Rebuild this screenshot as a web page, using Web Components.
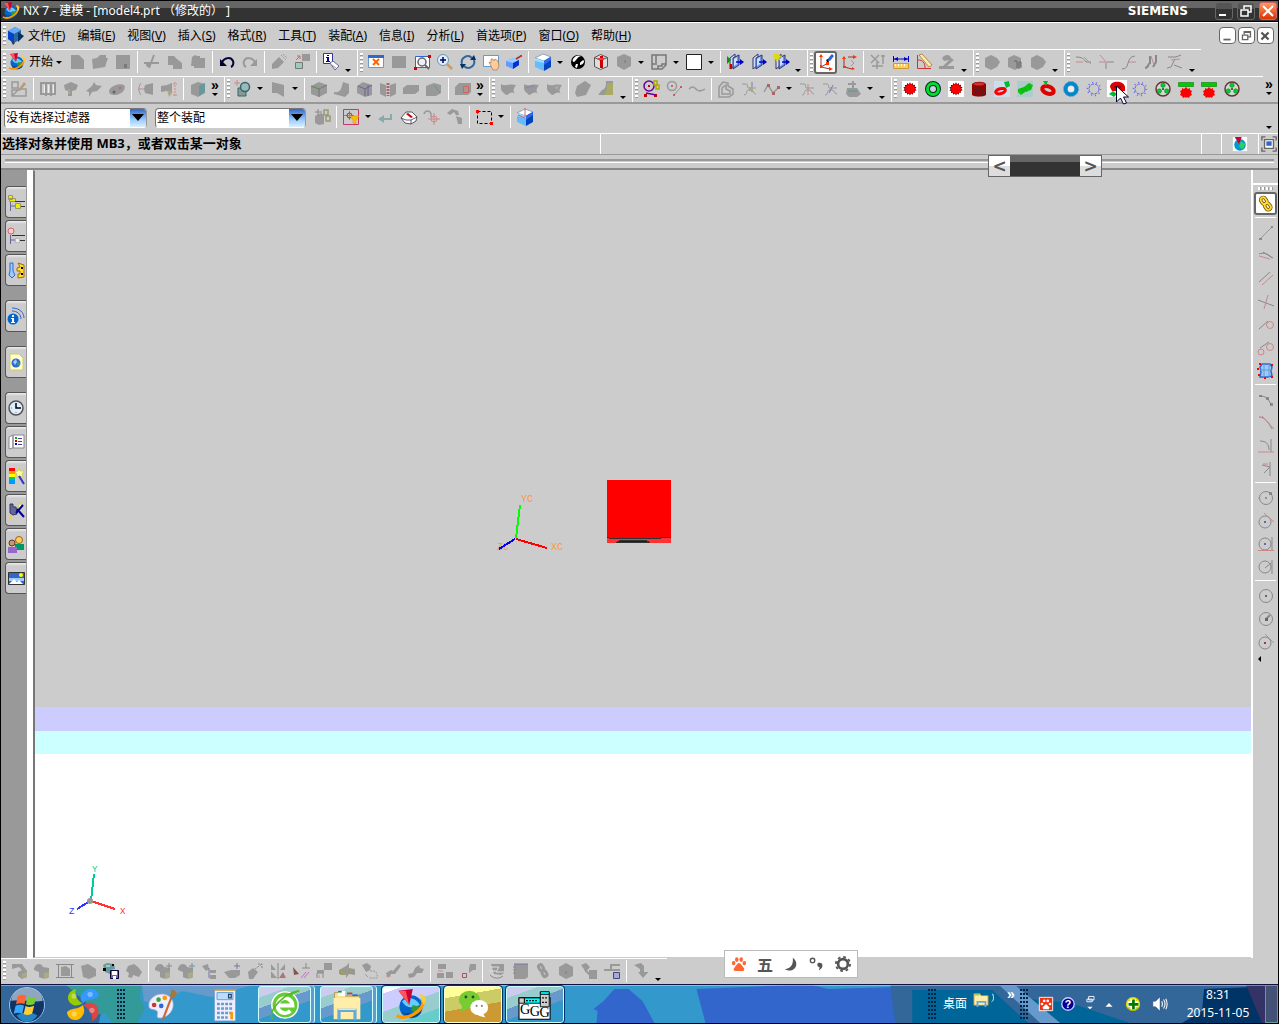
<!DOCTYPE html>
<html lang="zh-CN">
<head>
<meta charset="utf-8">
<title>NX 7 - 建模</title>
<style>
  html, body {
    height: 100%;
    margin: 0;
    overflow: hidden;
  }
  body {
    font: 12px/16px "Noto Sans", "Noto Sans CJK SC", sans-serif;
    text-spacing-trim: space-all;
    color: #000;
    background: #ccc;
  }
</style>
</head>
<body>
<nx-app></nx-app>

<script>
const gear = (fill) => `<path fill="${fill}" d="M9 1l1.300 2.200 2-1.500.4 2.500 2.500-.3-.6 2.400 2.400.6-1.700 1.900 1.700 1.700-2.400.8.7 2.300-2.500-.2-.4 2.500-2.100-1.400L9 17l-1.300-2.400-2 1.500-.4-2.500-2.500.3.6-2.400L1 10.800l1.700-1.900L1 7.200l2.400-.8-.7-2.300 2.500.2.400-2.500 2.100 1.400z"/>`;
const cube = `<path fill="#fff" stroke="#369" stroke-width=".5" d="M1 5l8-4 8 3-7 4z"/><path fill="#6bf" d="M1 5l9 3v10l-9-4z"/><path fill="#9df" d="M1 5l9 3v2L1 8z"/><path fill="#04b" d="M17 4l-7 4v10l7-4z"/><path fill="#36e" d="M17 4l-7 4v4l7-5z"/>`;
const section = `<path fill="#cdf" stroke="#336" d="M4 5l5-4v11l-5 4z"/><path fill="#69f" stroke="#336" d="M7 5l6-3v10l-6 4z"/><path fill="#cdf" d="M8 6l3-2v7l-3 2z"/><path stroke="#00c" stroke-width="1.500" d="M10 9h5"/><path fill="#00c" d="M14 6l4 3-4 3z"/>`;
const wheel = `<circle cx="9" cy="9" r="7" fill="#cdc" stroke="#633" stroke-width="1.500"/><g fill="#0c3" stroke="#363" stroke-width=".5"><circle cx="9" cy="5.200" r="2.200"/><circle cx="5.300" cy="11" r="2.200"/><circle cx="12.700" cy="11" r="2.200"/></g><circle cx="9" cy="9" r="1" fill="#333"/>`;
const rack = `<path fill="#0c0" stroke="#393" d="M1.500 2.500h15v4h-15z"/><path fill="#f00" d="M5 8l2 1 2-2 2 2 2-1v2l2 1-1 2 1 2-2 1-1 2-2-1-1 1-1-1-2 1-1-2-2-1 1-2-1-2 2-1z"/>`;
const sprocket = `<circle cx="9" cy="9" r="5" fill="none" stroke="#66c" stroke-dasharray="3 1"/><circle cx="9" cy="9" r="6.500" fill="none" stroke="#66f" stroke-width="1.500" stroke-dasharray="1 3"/>`;
const spur = `<path fill="#fff" d="M1 1h16v16H1z"/><g transform="translate(1.500 1.500) scale(.83)">${gear('#600')}</g><circle cx="9" cy="9" r="5" fill="#f00"/>`;
const sheet = `<path class="g" d="M2 4c4 3 8-1 15 1-3 4-3 6-1 9-5-4-7 2-9 1-3-3-4-3-5-6z"/>`;
const blob = `<path class="g" d="M3 3c3-2 6-1 7 2l6 1v9c-3 2-6 2-10 0v-5L1 8V6z"/><path fill="#aa8" d="M11 11l5-1v5l-5 2z"/>`;
const nxLogo = `<circle cx="9" cy="10" r="6.500" fill="#06c"/><path fill="#6cf" d="M4 7c3-3 8-2 10 2-3 1-7 3-10-2z"/><path fill="#048" d="M4 13c3 4 8 4 11 0-4 1-8 1-11 0z"/><path fill="#393" d="M10 9l4 1-2 4-3-2z"/><path fill="none" stroke="#f90" stroke-width="1.800" d="M1 15c5 3 15-2 15-9"/><path fill="#fc3" d="M14 3c4 0 4 4 2 6z"/><path fill="#c03" d="M2 1l8-1-2 9z"/><path fill="#f55" d="M2 1l4 0 2 8z"/>`;
const curl = `<path class="l" d="M2 4h4c3 0 0 4 3 4h7M4 15c4 0 1-5 5-5h2c3 0 2 4 5 4"/>`;

const ICONS = {
  'nx-logo': nxLogo,
  'modeling': `<path fill="#369" d="M2 4l7-4 6 3v9l-7 4-6-4z"/><path fill="#6af" d="M2 4l7-4 6 3-7 4z"/><path fill="#04c" d="M2 4l6 3v9l-6-4z"/><path fill="#036" d="M12 5l6 4-6 6z"/><path fill="#333" d="M5 14l4 2-2 2z"/>`,
  'new': `<path class="g" d="M3 2h8l5 5v9H3z"/>`,
  'open': `<path class="g" d="M1 6l5-1 3-3h6v3h2l-3 9-12 2z"/>`,
  'save': `<path class="g" d="M2 2h14v14H2z"/><path class="d" d="M10 11h3v4h-3z" opacity=".6"/>`,
  'cut': `<path class="l" stroke-width="2" d="M1 10h15M11 2L6 15"/><circle cx="5" cy="12" r="2" class="g"/>`,
  'copy': `<path class="g" d="M2 3h6l3 3 5 4v6H7v-4H2z"/>`,
  'paste': `<path class="g" d="M3 4l3-2 2 1 3 0v2h5v10H5v-2H2z"/>`,
  'undo': `<path fill="none" stroke="#003" stroke-width="2" d="M4 9c3-5 9-5 11-1 1 2 0 5-2 6"/><path fill="#003" d="M2 6v7h7z"/>`,
  'redo': `<path class="l" stroke-width="2" d="M14 9C11 4 5 4 3 8c-1 2 0 5 2 6"/><path class="g" d="M16 6v7H9z"/>`,
  'repeat': `<path class="g" d="M2 11l7-7 5 5-6 6-6 1z"/><path class="l" stroke-dasharray="2 1" d="M11 2l5 5M13 1l4 4"/>`,
  'properties': `<path class="g" d="M9 1h8v7H9z"/><path fill="#9cb" stroke="#777" d="M2.500 9.500h7v6h-7z"/><path fill="none" stroke="#c66" d="M3 7l4-4M4 3h3v3"/>`,
  'information': `<path fill="#fff" stroke="#339" d="M1.500 0.500h9v10h-9z"/><path fill="#009" d="M5 2h2v1H5zM4 4h3v4h1v1H4V8h1V5H4z"/><path fill="#fff" stroke="#669" d="M8 10l3-2 6 5-4 4z"/><path stroke="#999" d="M10 12l4 3"/>`,
  'fit': `<path fill="#fff" stroke="#69c" d="M1.500 2.500h15v12h-15z"/><path fill="#36c" d="M1 2h16v3H1z"/><path stroke="#f60" stroke-width="2" d="M6 6l6 6M12 6l-6 6"/>`,
  'block': `<path class="g" d="M2 3h14v12H2z"/>`,
  'zoom-area': `<path fill="#fff" stroke="#36c" d="M2.500 3.500h14v11h-14z"/><circle cx="9" cy="9" r="4" fill="#eef" stroke="#666" stroke-width="1.500"/><path stroke="#666" stroke-width="2" d="M12 12l4 4"/><path fill="#c00" d="M1 14h3v3H1zM15 2h3v3h-3z"/>`,
  'zoom': `<circle cx="7" cy="7" r="5.500" fill="#def" stroke="#69a"/><path stroke="#006" stroke-width="1.500" d="M4 7h6M7 4v6"/><path stroke="#c96" stroke-width="2.500" d="M11 11l5 5"/>`,
  'rotate-view': `<path fill="none" stroke="#369" stroke-width="2" d="M3 11a6 6 0 0 1 10-6M15 7a6 6 0 0 1-10 6"/><path fill="#036" d="M11 7h6l-2-5zM7 11H1l2 5z"/>`,
  'pan': `<path fill="#fff" stroke="#69c" d="M1.500 2.500h15v11h-15z"/><path fill="#fc9" stroke="#a74" stroke-width=".7" d="M7 9l2 1V6l2 0 1 2 1-2 3 2 1 5-2 4h-4z"/>`,
  'perspective': `<path fill="#69f" d="M1 8l7-3 6 2v5l-6 4-7-3z"/><path fill="#9cf" d="M1 8l7-3 6 2-6 3z"/><path fill="#03c" d="M8 10l6-3v5l-6 4z"/><path stroke="#933" stroke-width="1.500" d="M11 6l5-3"/><path fill="#c33" d="M15 2h2v2h-2z"/>`,
  'shaded': cube,
  'sphere': `<circle cx="9" cy="9" r="7" fill="#000"/><path fill="#fff" d="M4 6c2-4 7-4 8-3-4 1-4 4-7 6-1 0-2-1-1-3zM11 10c1-2 4-4 4-2 0 3-3 4-4 4zM7 11l2 0-1 4-2-1z"/>`,
  'clip': `<path fill="#ddd" stroke="#555" d="M2.500 4.500l6-3 7 3v9l-7 3-6-3zM2.500 4.500l6 3 7-3"/><path fill="#c00" d="M8 3h3v12H8z"/><path fill="#f33" d="M6 5h6v2H6z"/>`,
  'hexagon': `<path class="g" d="M2 4l7-3 7 3v9l-7 4-7-4z"/><path fill="#888" d="M9 7h2v3H9z"/>`,
  'layer': `<path fill="none" stroke="#777" stroke-width="1.500" d="M2 2h14v10l-4 4H2zM6 2v8M2 11h5M8 16v-3h4v-2h4"/>`,
  'background': `<path fill="#fff" stroke="#222" d="M1.500 1.500h15v15h-15z"/>`,
  'section-edit': section + `<path fill="#090" d="M1 3l4 4-4 4z"/><path fill="#c00" d="M4 11h2v5H4z"/>`,
  'section': section,
  'section-new': section + `<path stroke="#dd0" stroke-width="1.500" d="M5 0v9M1 4h9M2 1l6 6M8 1L2 7"/>`,
  'wcs': `<path fill="none" stroke="#933" d="M4 4v10l9 2M4 14l7-4"/><path fill="#f30" d="M2 4l2-3 2 3zM12 14l4 2-4 2zM3 12h2v3H3zM9 9h3v3H9z"/><path fill="#36c" d="M13 3l2-2 2 2-4 5-3-1z"/><path fill="#013" d="M9 7l2-1 1 3-2 0z"/>`,
  'wcs-origin': `<path fill="none" stroke="#933" d="M4 5v9l8 2M8 4h6"/><path fill="#f30" d="M2 6l2-3 2 3zM3 13h3v2H3zM12 14l3 2-3 1zM13 2l4 2-4 2z"/><path class="l" d="M11 7l3 3-3 3"/>`,
  'expression': `<path class="l" stroke-width="1.500" d="M2 2l8 8M10 2l-8 8M8 9v7M3 13h11M14 2v9M12 3h4"/>`,
  'ruler': `<path fill="#fc6" stroke="#c93" d="M1.500 10.500h15v5h-15z"/><path stroke="#fff" stroke-width="2" stroke-dasharray="1 2" d="M3 12h12"/><path stroke="#00c" d="M1.500 3v6M16.500 3v6M2 6h14"/><path fill="#00c" d="M2 6l4-2v4zM16 6l-4-2v4z"/>`,
  'angle': `<path fill="none" stroke="#c33" d="M2.500 2v13.500H16M3 7c5 0 7 3 7 8"/><path fill="#fe9" stroke="#963" stroke-width=".7" d="M4 2l3-1 10 11-3 2z"/>`,
  'compass': `<path class="g" d="M1 13h15v3H1zM4 5c3-4 8-4 9 0l3 2-7 6H5l6-6-5 1z"/>`,
  'solid': `<path class="g" d="M2 5l6-3 6 3 3 4-3 5-6 3-6-3z"/>`,
  'solid-info': `<path class="g" d="M2 5l6-3 7 3v9l-6 3-7-3z"/><path fill="none" stroke="#666" d="M8 8h3v7M13 16V9h2v6"/>`,
  'trim-a': `<path class="k" d="M2 4c6 0 8 2 10 5h5"/><path class="r" d="M10 4l7 7M2 9h7"/>`,
  'trim-b': `<path class="k" d="M9 9v7M10 9h7"/><path class="r" d="M3 2l6 7M2 9h6"/>`,
  'trim-c': `<path class="k" d="M2 16c9 0 3-12 13-13"/><path class="r" d="M9 9h7"/>`,
  'trim-d': `<path class="k" stroke-width="2" d="M2 15c4 0 3-5 5-5V3M13 2v7l-3 5"/><path class="r" d="M8 3l3 9"/>`,
  'trim-e': `<path class="k" d="M2 4h8l5-2M9 6L5 14l-4 1M8 12l8 3"/><path class="r" d="M5 7l9-1"/>`,

  'sketch': `<path class="l" stroke-width="1.500" d="M2 2h6v6H2zM9 9h7v7H2v-6h7M2 16l7-7"/><path fill="#b97" d="M8 10l6-8 2 2-6 7z"/>`,
  'datum-plane': `<path class="l" stroke-width="2" d="M2 3h14v11H2zM7 4v12M12 4v12"/><path stroke="#eee" d="M5.500 5v8M9.500 5v8M14.500 5v8"/>`,
  'extrude': `<path class="g" d="M2 5l7-3 7 3-2 5-4 1v5H6v-5L3 10z"/><path fill="#aa8" d="M6 9h2v5H6z"/>`,
  'revolve': `<path class="g" d="M9 2l2 3 6 1-5 5-5 1-3 5v-5l-3-1 6-5z"/>`,
  'hole': `<path class="g" d="M1 11c1-5 11-8 15-6 3 3-2 10-9 10-4 0-6-1-6-4z"/><circle cx="12" cy="8" r="1.500" fill="#a77"/><circle cx="6" cy="12" r="1.500" class="d"/>`,
  'boss': `<path class="l" d="M4 3c-3 4-3 8 0 12"/><path class="g" d="M8 5l8-2v12l-8-2-1-4z"/><path class="r" d="M2 9h6"/>`,
  'pattern': `<path class="g" d="M1 6l6-1 5-2v9l-5-1-6 1z"/><path fill="#aa8" d="M7 10l6 2-4 5z"/><path class="r" stroke-dasharray="2 1" d="M15 2v14M13 4h4M13 15h4"/>`,
  'feature': `<path class="g" d="M2 5l7-3 7 2v9l-7 4-7-3z"/><path fill="#699" d="M10 6l6-3v9l-6 4z"/>`,
  'boolean': `<path fill="#899" stroke="#366" d="M4 8h8v8H4z"/><circle cx="11" cy="7" r="4.500" fill="#9bb" stroke="#366" stroke-width="1.500"/><path class="r" d="M0 3h6M3 0v6"/>`,
  'trim-body': `<path class="g" d="M3 2l12 3v12L8 13H3z"/>`,
  'blend': `<path class="g" d="M1 6l8-4 8 3v8l-8 4-8-3z"/><path fill="none" stroke="#776" d="M1 6l8 3 8-4M9 9v8"/><path stroke="#7a7" d="M4 5l7 3"/>`,
  'bridge': `<path class="g" d="M1 12c7 1 7-3 9-10l6 2v9l-4 4-11-3z"/>`,
  'shell': `<path class="g" d="M1 6l6-4 9 3v10l-7 2-8-4z"/><path fill="none" stroke="#669" d="M2 6l7 3v7M9 9l7-4M12 5v11"/>`,
  'thread': `<path class="g" d="M1 3l6 2v12l-6-3zM11 5l6-2v11l-6 3z"/><path fill="none" stroke="#a66" stroke-width="3" stroke-dasharray="2 1" d="M9 3v13"/>`,
  'slab': `<path class="g" d="M1 8l4-3h12v6l-4 3H1z"/>`,
  'draft': `<path class="g" d="M1 6l8-3 7 2v8l-5 3H1z"/><path stroke="#698" d="M9 5l6 8"/>`,
  'offset': `<path class="g" d="M1 7l4-4h12v9l-3 3H1z"/><path fill="#a98" stroke="#c66" d="M9.500 6.500h5v6h-5z"/>`,
  'surface-a': sheet,
  'surface-b': `${sheet}<path stroke="#88a" d="M3 8l9-2"/>`,
  'surface-c': `${sheet}<path fill="#aaa" d="M9 7l5-1-2 4z"/>`,
  'swept': `<path class="g" d="M3 6l8-5 6 4-5 10-9 2-2-4z"/>`,
  'law': `<path class="g" d="M5 10c4-1 4-5 4-9h7v14H1z"/><path fill="#aa6" d="M10 3h6v12H7c3-3 3-7 3-12z"/>`,
  'curve-circle': `<circle cx="7" cy="6" r="5" fill="none" stroke="#609" stroke-width="1.500"/><path fill="#c00" d="M6 5h2v2H6zM2 14h3v3H2zM12 14h3v3h-3z"/><path stroke="#609" stroke-width="1.500" d="M4 13l10 2"/><path fill="none" stroke="#aa0" stroke-width="1.500" d="M12 1h3v4h-3zM14 5h3v4h-3z"/>`,
  'curve-line': `<circle cx="7" cy="6" r="4.500" class="l" stroke-width="1.500"/><path class="l" d="M9 15l7-8"/><path class="R" d="M6 5h2v2H6zM8 14h2v2H8zM15 6h2v2h-2z" opacity=".5"/>`,
  'spline': `<path class="l" stroke-width="1.500" d="M1 9c4-4 6-1 8 1 3 2 5 1 8-1"/>`,
  'offset-curve': `<path class="l" stroke-width="1.500" d="M2 7l4-5 5 1v3l5 3v5l-4 3H2zM5 8l4-3v4l4 2v3H5z"/>`,
  'project-curve': `${curl}<path stroke="#77b" d="M12 2v10"/><path fill="#aa8" d="M9 7h4v4H9z"/>`,
  'join-curve': `<path class="l" stroke-width="1.500" d="M1 12L5 5l5 8 6-6"/><path fill="#a66" d="M4 4h3v3H4zM9 12h3v3H9zM14 6h3v3h-3z"/>`,
  'wrap-curve': `${curl}<path class="r" d="M10 4v11"/>`,
  'edit-curve': `${curl}<path stroke="#77b" d="M12 5l-4 8"/>`,
  'text-curve': `<path class="g" d="M3 8h10l4 6-4 3H5l-3-3z"/><path class="l" stroke-width="2" d="M4 4h8M9 1v9"/><path stroke="#599" d="M4 11h9"/>`,
  'gear-spur': spur,
  'gear-ring': `<path fill="#cce" d="M1 1h16v16H1z"/><circle cx="9" cy="9" r="5.500" fill="#cce" stroke="#030" stroke-width="5"/><circle cx="9" cy="9" r="5.500" fill="none" stroke="#0d3" stroke-width="3"/>`,
  'gear-worm': `<path fill="#900" d="M2 4c3-3 12-3 14 0v11c-3 2-11 2-14 0z"/><path fill="#c33" d="M3 4c3-2 10-2 12 0-3 2-9 2-12 0z"/><path fill="none" stroke="#522" stroke-width="1.500" d="M4 7l9 8M8 7l7 6M3 11l6 5"/>`,
  'gear-pair': `<path fill="#cde" d="M1 1h16v16H1z"/><ellipse cx="7.500" cy="11" rx="5" ry="2.500" transform="rotate(-15 8 11)" fill="none" stroke="#f00" stroke-width="3"/><path fill="#0b3" d="M11 2l5-1 1 5-4 2z"/>`,
  'gear-screw': `<path fill="#acc" d="M1 1h16v16H1z"/><path fill="#0c0" d="M2 9l6-2 5-4 4 2-2 5-6 2-4 3-3-3z"/><path stroke="#393" d="M5 8l3 5M8 7l3 5M12 4l3 5"/>`,
  'gear-bevel': `<ellipse cx="9" cy="10" rx="6" ry="3.500" transform="rotate(20 9 10)" fill="none" stroke="#d00" stroke-width="4"/><path fill="#0b3" d="M4 1h5l-2 5z"/>`,
  'gear-blue': `<circle cx="9" cy="9" r="5.500" fill="none" stroke="#08c" stroke-width="4"/><circle cx="9" cy="9" r="7.500" fill="none" stroke="#69c" stroke-dasharray="2 2"/><circle cx="9" cy="9" r="3" fill="#eee"/>`,
  'sprocket-a': sprocket,
  'gear-mesh': `<path fill="#fff" d="M-1 0h20v17H-1z"/><path fill="#d00" d="M2 7c0-7 14-7 15 0v4H4z"/><path fill="#900" d="M6 6h7v2H6z"/><path fill="#0b3" d="M1 14l4-3 4 3-3 3z"/><path fill="#fff" stroke="#003" d="M8.500 6v16l4-4 3 6 3-1-3-6h5z"/>`,
  'sprocket-b': sprocket,
  'wheel-a': wheel, 'wheel-b': wheel,
  'rack-a': rack, 'rack-b': rack,

  'snap-off': `<path class="g" d="M2 8l6-3 3 2v9l-5 1-4-2z"/><path class="k" d="M5 1v7M2 4h7"/><path fill="none" stroke="#997" stroke-width="1.500" d="M11 2h4v5h-4zM13 8h4v5h-4z"/>`,
  'filter': `<path fill="none" stroke="#c36" d="M1.500 1.500h15v15h-15z"/><path class="k" d="M7.500 3v9M2 7.500h10"/><circle cx="7.500" cy="7.500" r="2.500" fill="none" stroke="#933"/><path fill="#fb0" stroke="#c90" stroke-width=".5" d="M8 8h9l-3 4v4l-3-1v-3z"/>`,
  'return': `<path fill="none" stroke="#8aa" stroke-width="2" d="M14 6v5H5"/><path fill="#8aa" d="M7 7v8l-6-4z"/>`,
  'erase': `<path fill="#fff" stroke="#333" stroke-width=".8" d="M1 10l5-6h6l5 5-1 4-5 3-6-1z"/><path fill="#c00" d="M8 5l5 4-2 1-5-4z"/><path fill="none" stroke="#336" stroke-width=".8" d="M11 16v-4l6-3M1 10l5 2h5"/>`,
  'undo-point': `<path class="l" stroke-width="1.500" d="M1 6c1-4 6-4 7 0v3"/><circle cx="11" cy="11" r="3" class="r"/><path class="r" d="M11 5v12M5 11h12"/>`,
  'highlight': `<path class="g" d="M1 5l5-4 6 2 1 4h-3l-2-3-4 3zM10 8l6 2v6h-4z"/>`,
  'rectangle': `<path fill="none" stroke="#000" stroke-dasharray="3 2" d="M2.500 3.500h14v12h-14z"/><path fill="#f00" d="M1 2h3v3H1zM15 14h3v3h-3z"/>`,
  'cube-axis': cube + `<path fill="none" stroke="#c66" d="M9 0v9M2 7l7 3"/>`,
  'globe': `<path fill="#fff" d="M1 1h16v16H1z"/><circle cx="9" cy="10" r="6.500" fill="#09c"/><path fill="#3c6" d="M10 6l5 3-3 6-4-3z"/><path fill="#c03" d="M3 1h8L8 9z"/>`,
  'fullscreen': `<path fill="none" stroke="#666" stroke-width="1.500" d="M1 5V1h4M13 1h4v4M17 13v4h-4M5 17H1v-4M4 4h10v10H4z"/><path fill="#fff" d="M5 5h8v8H5z"/><path fill="#36c" d="M6 6h6v5H6z"/>`,

  'links': `<g fill="none" transform="rotate(-35 9 9)"><g stroke="#750" stroke-width="3.500"><rect x="6.500" y="1.500" width="5" height="7" rx="2.500"/><rect x="6.500" y="8.500" width="5" height="7" rx="2.500"/></g><g stroke="#fd3" stroke-width="1.800"><rect x="6.500" y="1.500" width="5" height="7" rx="2.500"/><rect x="6.500" y="8.500" width="5" height="7" rx="2.500"/></g></g>`,
  'line': `<path class="l" d="M3 15L15 3"/><path class="d" d="M2 14h3v2H2zM14 2h2v2h-2z" opacity=".6"/>`,
  'arc-tangent': `<path class="k" d="M2 7c5-2 9 0 13 4M6 5l10 6"/><path class="r" d="M2 9l11 3"/>`,
  'parallel': `<path class="k" d="M2 12L13 2"/><path class="r" d="M5 15L16 5"/>`,
  'cross': `<path class="k" d="M1 7l16 6"/><path class="r" d="M11 2L7 16"/>`,
  'line-circle': `<path class="k" d="M2 13l9-8"/><circle cx="13" cy="9" r="3.500" class="r"/>`,
  'two-circles': `<path class="k" d="M3 9l9-6"/><circle cx="4" cy="13" r="3" class="r"/><circle cx="13" cy="8" r="3.500" class="r"/>`,
  'shape': `<path fill="#9cf" stroke="#36c" stroke-width="1.500" d="M5 2h8l2 3-1 4 1 5-4 1H3l1-5-1-5z"/><path fill="none" stroke="#69c" d="M3 8h12M7 2v13M12 2v13"/><g fill="#f00"><path d="M2 1h2v2H2zM14 2h2v2h-2zM1 12h2v2H1zM14 14h2v2h-2zM7 15h2v2H7zM0 6h2v2H0z"/></g>`,
  'arc': `<path class="k" d="M3 5c6 0 9 3 11 9"/><path class="d" opacity=".6" d="M2 4h3v2H2zM9 6h3v3H9zM13 12h3v3h-3z"/>`,
  'arc-line': `<path class="k" d="M2 3c6 0 9 5 13 12"/><path class="r" d="M5 2l12 13"/>`,
  'fillet-a': `<path class="k" d="M14 2v13M3 4c6 0 9 3 9 9"/><path class="r" d="M1 15h16"/>`,
  'fillet-b': `<path class="k" d="M13 2v14M5 5l8 2-6 6"/><path class="r" d="M6 4h5"/>`,
  'circle-a': `<circle cx="9" cy="9" r="6.500" class="k"/><path class="d" opacity=".6" d="M8 8h2v2H8zM12 3h3v3h-3z"/><path class="r" d="M1 9h2"/>`,
  'circle-b': `<circle cx="8" cy="10" r="6" class="k"/><path class="r" d="M7 1l10 9"/><path fill="#66a" d="M7 9h2v2H7z"/>`,
  'circle-c': `<circle cx="8" cy="9" r="6" class="k"/><path class="k" d="M15 2v14"/><path class="r" d="M1 15.500h16"/><path fill="#66a" d="M7 8h2v2H7z"/>`,
  'circle-d': `<circle cx="8" cy="9" r="6" class="k"/><path class="k" d="M15 2v14M8 10l6-5"/>`,
  'circle-e': `<circle cx="9" cy="9" r="6.500" class="k"/><path class="d" d="M8 8h2v2H8z"/>`,
  'circle-f': `<circle cx="9" cy="9" r="6.500" class="k"/><path class="k" stroke-width="2" d="M9 9l4-4"/><path class="d" d="M8 8h3v3H8z"/>`,
  'circle-g': `<circle cx="8" cy="10" r="6" class="k"/><path class="r" d="M8 1l9 9"/><path fill="#844" d="M7 9h2v2H7z"/>`,

  'asm-find': `<path class="g" d="M2 2h10l2 3 3 4v6l-5 2-4-3v-4l4-2-3-3-7 2z"/><path fill="#aa8" d="M12 12l5-2v5l-5 1z"/>`,
  'asm-open': blob,
  'asm-box': `<path class="k" d="M2.500 2v14M15.500 2v14M0 2.500h18M0 15.500h18"/><path class="g" d="M5 5l5-1 4 3v7H5z"/>`,
  'asm-show': `<path class="g" d="M2 4l7-2 8 5v7l-7 3-6-2-1-6z"/>`,
  'asm-save': `<path fill="#699" d="M1 3l4-2 7 1 1 5-5 1v4l-5-2z"/><path fill="#9cc" d="M4 3h4v2H4z"/><path fill="#000" d="M1 6h3v3H1zM10 2h2v2h-2z"/><path fill="#66c" stroke="#003" d="M8.500 8.500h8v8h-8z"/><path fill="#fff" d="M10 9h5v4h-5zM11 14h3v3h-3z"/>`,
  'asm-part': `<path class="g" d="M3 4l6-2 4 3 4 5-3 5-6-2-1 3-4-1 1-4-3-2z"/>`,
  'asm-add': blob + `<path class="k" d="M12 4h6M15 1v6"/>`,
  'asm-create': blob + `<path stroke="#699" d="M12 4h6M15 1v6"/>`,
  'asm-replace': `<path class="g" d="M2 4l6-2 1 5-3 2zM10 8h6v3h-6zM10 13h6v4h-6z"/><path stroke="#77a" d="M9 6v10"/>`,
  'asm-array': `<path class="g" d="M1 10l7-2h9v5l-5 3H6z"/><path stroke="#77a" d="M11 4h6M14 1v6"/>`,
  'asm-move': `<path class="g" d="M2 10l5-4 5 4-5 7H3z"/><path class="k" stroke-dasharray="2 1" d="M9 7l7-5M12 2h4v4"/>`,
  'asm-mirror': `<path class="g" d="M2 2l5 6H2zM16 2l-5 6h5zM2 16V9l6 7z"/><path fill="#a77" d="M10 16h7l-3-6z"/><path class="k" d="M9 1v16"/>`,
  'asm-constrain': `<path class="k" d="M10 6h8M14 1v5"/><path fill="#855" d="M1 5l6 7-5 1z"/><path stroke="#c6c" d="M9 16l5-6M12 16l5-6"/>`,
  'asm-remember': `<path class="g" d="M9 1h8v7H9zM2 8h7v3H2z"/><path class="k" d="M2 16v-5h6v5"/><path class="r" d="M4 16v-3"/>`,
  'asm-section': `<path class="g" d="M1 8l7-4 3-3v5l6 1v6l-6-1-3 4v-4H1z"/><path fill="none" stroke="#996" d="M2.500 8.500h5v4h-5zM10.500 8.500h5v3h-5z"/>`,
  'asm-link': `<path class="g" d="M1 3l5-2 4 3-1 4-4 2z"/><path class="l" stroke-dasharray="2 1" d="M9 9c6-1 8 2 7 7H8"/><path stroke="#a99" d="M4 12l3 3"/>`,
  'asm-wave': `<path class="g" d="M2 11l5-3 2 1 6-7 2 2-6 8h-4l-3 4z"/><path class="r" d="M2 14h5"/>`,
  'asm-explode': `<path class="g" d="M1 12l5-1 2-5 4-3 1 3 4 1-2 4h-5l-3 4-5 1z"/>`,
  'asm-stack': `<path class="g" d="M2 2h8v5H2zM1 11h7v5H1zM10 10h7v6h-7z"/><path class="r" d="M2 9h5"/>`,
  'asm-step': `<path class="g" d="M11 2h6v6h-3l-4 3V6z"/><path fill="none" stroke="#a55" d="M3.500 11.500h4v4h-4z"/>`,
  'asm-clear': `<path class="g" d="M3 2h13v9l-3 2-7-1z"/><path fill="none" stroke="#ddd" d="M2 5h9l-3 5h8M1 9h7"/><path class="k" d="M2 13c4 4 9 4 13 1"/>`,
  'asm-sheet': `<path class="g" d="M3 2h14v13l-3 2H3z"/><path stroke="#77a" d="M3 2h14"/><path class="k" d="M2 5h3M2 8h3M2 11h3"/>`,
  'asm-chain': `<g fill="none" stroke="#999" stroke-width="3" transform="rotate(-30 9 9)"><rect x="7" y="2" width="4" height="6" rx="2"/><rect x="7" y="9" width="4" height="6" rx="2"/></g>`,
  'asm-cube': `<path class="g" d="M2 5l7-4 7 4v9l-7 3-7-4z"/><path stroke="#77a" d="M9 9v3"/>`,
  'asm-graph': `<path class="g" d="M1 3l5-2 4 4-4 5zM9 8h8v9H9z"/><path class="l" stroke-width="2" d="M5 8l5 5"/>`,
  'asm-tree': `<path class="l" stroke-width="2" d="M1 8h8M8 8V3h9M8 8h9"/><path fill="#aac" stroke="#448" d="M10.500 10.500h6v6h-6z"/>`,
  'asm-sequence': `<path class="g" d="M2 3l7-2 3 3v6h4l-5 6-5-6h2V7z"/><path stroke="#7a7" d="M11 14l5-4"/>`,

  'nav-assembly': `<path fill="#ee0" stroke="#996" d="M1.500 2.500h4v4h-4zM8.500 10.500h5v5h-5zM2.500 5.500h6v3h-6z"/><path fill="none" stroke="#333" d="M8 8.500h10M14 13.500h4"/><path stroke="#669" d="M3.500 9v9M4 13h4"/>`,
  'nav-constraint': `<circle cx="4" cy="4" r="3" fill="#fcc" stroke="#c66"/><path fill="none" stroke="#333" d="M5 8.500h13M13 13.500h5"/><path stroke="#669" d="M3.500 8v9M4 13h4"/><path fill="#eee" stroke="#999" stroke-dasharray="1 1" d="M8.500 11.500h4v4h-4z"/>`,
  'nav-part': `<path fill="#9cf" stroke="#36c" d="M3 2h3v8l2 4-3 3-3-3 1-4z"/><path fill="#fd3" stroke="#a60" d="M11 2l6 2v12l-6 1v-4h2v-3h-3V7l3-1z"/><path fill="#000" d="M14 6h2v2h-2zM14 12h2v2h-2z"/>`,
  'nav-info': `<circle cx="6" cy="12" r="5.500" fill="#06c"/><path fill="#fff" d="M5 8h2v2H5zM4 11h3v4h1v1H4v-1h1v-3H4z"/><path fill="none" stroke="#36c" d="M5 4c5 0 9 3 9 8M5 1c8 0 12 5 12 10"/>`,
  'nav-web': `<path fill="#ffc" stroke="#cc6" d="M3 1h9l4 4v12H3z"/><circle cx="9" cy="10" r="4.500" fill="#36c"/><path fill="#9cf" d="M6 9l3-3 1 3-2 3z"/><path fill="#3a6" d="M10 9l3 1-2 4z"/>`,
  'nav-history': `<circle cx="9" cy="9" r="7" fill="#def" stroke="#555" stroke-width="1.500"/><path stroke="#000" stroke-width="1.500" fill="none" d="M9 4v5h5"/><path stroke="#777" stroke-dasharray="1 2" d="M4 9h2M9 13v2"/>`,
  'nav-pages': `<path fill="#fff" stroke="#889" d="M2 4l4-2v13l-4 1zM6 2h11v13H6z"/><path stroke="#448" d="M11 5.500h4M11 8.500h4M11 11.500h4"/><path fill="#0a0" d="M8 4h2v2H8z"/><path fill="#c00" d="M8 7h2v2H8z"/><path fill="#00c" d="M8 10h2v2H8z"/>`,
  'nav-rainbow': `<path fill="#f00" d="M2 1h6v3H2z"/><path fill="#f90" d="M2 4h6v3H2z"/><path fill="#ff0" d="M2 7h6v3H2z"/><path fill="#0c6" d="M2 10h6v3H2z"/><path fill="#09f" d="M2 13h6v4H2z"/><path fill="#ff9" stroke="#cc3" stroke-width=".7" d="M12 1l1 3 4 0-2 3 1 3-3-1-3 1V7L8 5l3-1z"/><path stroke="#33c" stroke-width="2" d="M12 9l5 8"/>`,
  'nav-tools': `<path fill="#669" stroke="#336" d="M3 3h3v3h3l1 7-4 1-3-2z"/><path fill="#fc3" d="M2 13l4 4-4 1z"/><path fill="#ff9" stroke="#cc3" stroke-width=".7" d="M13 1l1 3h3l-2 3h-4z"/><path stroke="#009" stroke-width="2" d="M10 8l7 8M16 4l-7 8"/>`,
  'nav-roles': `<circle cx="12" cy="5" r="3.500" fill="#fc6" stroke="#960"/><path fill="#096" d="M8 9h9v6H8z"/><circle cx="5" cy="8" r="3" fill="#c96" stroke="#633"/><path fill="#96c" d="M1 12h9v6H1z"/>`,
  'nav-scene': `<path fill="#36c" stroke="#333" d="M1.500 3.500h16v12h-16z"/><path fill="#9cf" d="M2 9h15v3H2z"/><path fill="#fff" d="M2 15l5-5 3 3 2-2 4 4z"/><circle cx="14" cy="6" r="2" fill="#ff0"/>`,

  'paw': `<g fill="#f63"><ellipse cx="3" cy="8" rx="2" ry="2.500"/><ellipse cx="6.500" cy="4" rx="2" ry="2.700"/><ellipse cx="11.500" cy="4" rx="2" ry="2.700"/><ellipse cx="15" cy="8" rx="2" ry="2.500"/><path d="M9 8c2 0 3 3 5 5s1 4-2 4H6c-3 0-4-2-2-4s3-5 5-5z"/></g>`,
  'moon': `<path fill="#555" d="M11 2c6 4 5 12-1 14-3 1-6 0-8-1 7-1 10-6 9-13z"/>`,
  'punctuation': `<circle cx="4" cy="5" r="2.500" fill="none" stroke="#555" stroke-width="1.500"/><path fill="#555" d="M10 8c3-1 6 0 5 4-1 2-2 3-4 4l1-3c-3-1-3-4-2-5z"/>`,
  'settings': `<circle cx="9" cy="9" r="5.500" fill="none" stroke="#555" stroke-width="3"/><circle cx="9" cy="9" r="8" fill="none" stroke="#555" stroke-width="2" stroke-dasharray="3.140 3.140"/>`,

  'orb': `<circle cx="9" cy="9" r="8.700" fill="#258"/><circle cx="9" cy="9" r="8.300" fill="#136" stroke="#adf" stroke-width=".4"/><path fill="#bcd" d="M1.500 7C2 2 6 .8 9 .8s7 1.200 7.500 6.200C12 8 6 6 1.500 7z" opacity=".75"/><path fill="#3bf" opacity=".6" d="M4 14c3-2 7-2 10 0-3 4-7 4-10 0z"/><path fill="#f63" d="M4.500 5C6 4 7.300 4 8.600 4.600L7.800 8.500C6.500 8 5.300 8 3.800 8.700z"/><path fill="#7c3" d="M9.200 4.900c1.500.7 2.800.6 4.200-.1l-.9 3.700c-1.300.7-2.600.7-4 .1z"/><path fill="#3af" d="M3.600 9.400c1.400-.7 2.700-.6 4-.1l-.9 3.800c-1.300-.6-2.600-.5-4 .1z"/><path fill="#fc3" d="M8.300 9.500c1.400.6 2.700.5 4.100-.1l-1 3.800c-1.300.7-2.600.7-4 .1z"/>`,
  'flower': `<path fill="#9c0" d="M5 0C1 1-1 5 2 8s6 0 7 0C6 7 4 4 5 0z"/><path fill="#39f" d="M18 4c0-4-6-6-9-2s0 5 0 6c2-3 6-1 9-4z"/><path fill="#fb0" d="M0 13c0 4 5 6 8 3s1-6 1-7c-3 3-6 1-9 4z"/><path fill="#d44" d="M14 18c4-2 5-6 2-9s-6 0-7 0c3 2 6 5 5 9z"/><g opacity=".35" fill="#fff"><circle cx="4" cy="4" r="1.500"/><circle cx="13" cy="3" r="1.500"/><circle cx="4" cy="14" r="1.500"/><circle cx="14" cy="12" r="1.500"/></g>`,
  'palette': `<path fill="#eef" stroke="#9ac" stroke-width=".4" d="M1 9c0-4 5-7 9-6s6 5 4 9-7 5-8 4 1-3-1-4-4 0-4-3z"/><circle cx="4" cy="9" r="1.300" fill="#c33"/><circle cx="6.500" cy="6" r="1.300" fill="#3a3"/><circle cx="10" cy="5" r="1.300" fill="#f90"/><circle cx="8" cy="9.500" r="1.300" fill="#36c"/><path stroke="#c63" stroke-width="1.200" d="M9 17l5-13"/><path fill="#a73" d="M13 4l1-4 3 2-2 3z"/>`,
  'calculator': `<path fill="#eef" stroke="#69c" stroke-width=".5" d="M3 0h12v18H3z"/><path fill="#c93" d="M3 0h12v1H3z"/><path fill="#bdf" stroke="#69c" stroke-width=".5" d="M4.500 2h9v4h-9z"/><path stroke="#246" stroke-width=".7" fill="none" d="M11 3h1.500v2H11z"/><g stroke="#69c" stroke-width="1.400" stroke-dasharray="1.600 .7"><path d="M4.500 8.500h9M4.500 11h9M4.500 13.500h9M4.500 16h6"/></g><path fill="#f90" d="M12 13h1.500v4H12z"/>`,
  'folder': `<path fill="#fd8" stroke="#a83" stroke-width=".4" d="M2 2h5l1 2h8v12H2z"/><path fill="#fff" d="M4 1h4v3H4z"/><path fill="#093" d="M4 1h2v1H4z"/><path fill="#c33" d="M9 2h3v1H9z"/><path fill="#36c" d="M12 3h3v1h-3z"/><path fill="#fea" d="M1.500 5h15v12h-15z"/><path fill="none" stroke="#6ad" stroke-width="1.800" d="M4.500 17.500V12h9v5.500"/><path stroke="#cef" stroke-width=".6" d="M4 11.500h10"/>`,
  'chat': `<ellipse cx="7" cy="6" rx="6" ry="5" fill="#7c3"/><path fill="#7c3" d="M3 9l-1 4 4-2z"/><circle cx="5" cy="4.500" r=".8" fill="#252"/><circle cx="9" cy="4.500" r=".8" fill="#252"/><ellipse cx="12.500" cy="10.500" rx="5" ry="4.300" fill="#fff"/><path fill="#fff" d="M14 13l2 3-4-1z"/><circle cx="11" cy="9.500" r=".6" fill="#888"/><circle cx="14" cy="9.500" r=".6" fill="#888"/>`,
  'browser': `<circle cx="9" cy="9" r="7.800" fill="#fff"/><circle cx="9" cy="9" r="7" fill="#6c3"/><path fill="none" stroke="#fff" stroke-width="2.200" d="M5 9.300h8.200A4.200 4.200 0 1 0 12 12.300"/><path fill="none" stroke="#5b2" stroke-width=".9" d="M2 17C-1 12 9 2 17 1c-2 1-4 1-5 3"/>`,
  'recorder': `<path fill="#fff" stroke="#000" stroke-width=".6" d="M0 5h17.500v12H0z"/><path fill="#0ff" stroke="#000" stroke-width=".5" d="M3 5h9v3H3z"/><path fill="#ccc" stroke="#000" stroke-width=".5" d="M0 5h3v3H0zM12 2h5v8h-5z"/><path fill="#0ff" stroke="#000" stroke-width=".5" d="M12 1.500h5V3h-5z"/><path stroke="#000" stroke-width=".7" stroke-dasharray="1 .7" d="M4 6.500h6M13 5h3M13 7.500h3"/><text x="0.500" y="14" font-family="Liberation Serif" font-size="8" fill="#000">G</text><text x="6" y="15" font-family="Liberation Serif" font-size="8" fill="#000">G</text><text x="11.500" y="16" font-family="Liberation Serif" font-size="8" fill="#000">G</text>`,
  'tray-paw': `<path fill="#e31" stroke="#fff" d="M1.500 1.500h15v15h-15z"/><g fill="#fff"><circle cx="4.500" cy="9" r="1.500"/><circle cx="7" cy="5.500" r="1.500"/><circle cx="11" cy="5.500" r="1.500"/><circle cx="13.500" cy="9" r="1.500"/><path d="M9 9l4 4-1 2H6l-1-2z"/></g>`,
  'tray-help': `<circle cx="9" cy="9" r="7" fill="#009" stroke="#ccf" stroke-width="1.500"/><text x="9" y="13" text-anchor="middle" font-family="Liberation Sans" font-weight="bold" font-size="12" fill="#fff">?</text>`,
  'tray-restore': `<path fill="none" stroke="#fff" d="M7.500 0.500h6v4h-6zM5.500 3.500h6v3h-6z"/><path fill="#fff" d="M6 12h6l-3 3z"/>`,
  'tray-up': `<path fill="#fff" d="M5 12h8L9 8z"/>`,
  'tray-plus': `<circle cx="9" cy="9" r="8" fill="#dd0"/><path fill="none" stroke="#9a0" d="M3 13c3 4 9 4 12 0"/><path fill="#fff" d="M6 3h6v3h3v6h-3v3H6v-3H3V6h3z"/><path fill="#070" d="M8 4h3v4h4v3h-4v4H8v-4H4V8h4z"/>`,
  'speaker': `<path fill="#fff" stroke="#346" stroke-width=".5" d="M1 6h3l5-5v16l-5-5H1z"/><path fill="none" stroke="#fff" stroke-width="1.200" d="M11 6c1 2 1 4 0 6M13 4c2 3 2 7 0 10M15.500 3c2 4 2 8 0 12"/>`,
  'desk-folder': `<path fill="#fea" stroke="#a83" d="M1 2h7l1 2h8v11H1z"/><path fill="#9c6" d="M2 2h5v2H2z"/><path fill="none" stroke="#6ad" stroke-width="2" d="M5 17v-6h9v6"/><path fill="none" stroke="#fff" d="M22 2c2 4 1 8-1 9"/>`,
  'win-min': `<path fill="#fff" d="M4 12h7v2H4z"/>`,
  'win-restore': `<path fill="none" stroke="#fff" stroke-width="1.500" d="M7 7V4h7v6h-3M4 8h7v6H4z"/>`,
  'win-close': `<path stroke="#fff" stroke-width="2" d="M4 4l10 10M14 4L4 14"/>`,
  'doc-min': `<path fill="#666" d="M5 12h8v2H5z"/>`,
  'doc-restore': `<path fill="none" stroke="#666" stroke-width="1.500" d="M7 7V4h7v6h-3M5 8h6v5H5zM7 5h7"/>`,
  'doc-close': `<path stroke="#555" stroke-width="2.500" d="M5 5l8 8M13 5l-8 8"/>`
};

class NxElement extends HTMLElement {
  constructor() {
    super();
    this.attachShadow({ mode: 'open' });
  }

  connectedCallback() {
    const template = document.createElement('template');
    template.innerHTML = `<style>${this.getStyles()}</style>${this.getTemplate()}`;
    this.shadowRoot.replaceChildren(template.content.cloneNode(true));
  }

  getTemplate() { return '<slot></slot>'; }
  getStyles() { return ':host { display: block; }'; }
}

class NxIcon extends NxElement {
  getTemplate() {
    return `<svg viewBox="0 0 18 18" aria-hidden="true">${ICONS[this.getAttribute('name')] || ''}</svg>`;
  }

  getStyles() {
    return `
      :host { display: block; flex: none; width: var(--icon, 18px); height: var(--icon, 18px); }
      svg { display: block; width: 100%; height: 100%; overflow: visible; }
      .g { fill: #999; }
      .d { fill: #666; }
      .R { fill: #c00; }
      .l { fill: none; stroke: #999; }
      .k { fill: none; stroke: #888; }
      .r { fill: none; stroke: #c88; }
    `;
  }
}
customElements.define('nx-icon', NxIcon);

class NxTool extends NxElement {
  getTemplate() {
    const icon = this.getAttribute('icon');
    return `<button type="button" aria-label="${icon}"><nx-icon name="${icon}"></nx-icon><slot></slot></button>`;
  }

  getStyles() {
    return `
      :host { display: block; flex: none; }
      button {
        display: flex; align-items: center; justify-content: center;
        min-width: 23px; height: 23px; padding: 0; border: 0;
        background: none; font: inherit; color: inherit;
      }
      :host([wide]) button { gap: 3px; padding: 0 0 0 1px; }
      :host([active]) button {
        background: #fff; border: 2px solid #666; border-radius: 3px;
        box-sizing: border-box;
      }
    `;
  }
}
customElements.define('nx-tool', NxTool);

// Turns a list such as "cut copy | undo v" into tools, separators and arrows.
class NxToolbar extends NxElement {
  getTemplate() {
    const tools = (this.getAttribute('tools') || '').split(/\s+/).filter(Boolean);
    const parts = tools.map((name) => {
      if (name === '|') return '<i class="sep"></i>';
      if (name === 'v') return '<button class="drop" aria-label="more"></button>';
      if (name === 'V') return '<button class="drop low" aria-label="options"></button>';
      if (name === '>>') return '<button class="more" aria-label="overflow">»</button>';
      if (name.endsWith('*')) return `<nx-tool icon="${name.slice(0, -1)}" active></nx-tool>`;
      return `<nx-tool icon="${name}"></nx-tool>`;
    });
    const grip = this.hasAttribute('nogrip') ? '' : '<i class="grip"></i>';
    return `${grip}<slot></slot>${parts.join('')}`;
  }

  getStyles() {
    return `
      :host {
        display: flex; flex: none; align-items: center;
        box-sizing: border-box; padding: 0 3px 2px 0;
        border-top: 1px solid #fff; border-left: 1px solid #fff;
      }
      :host([first]) { border-left: 0; }
      :host([nogrip]) { border: 0; }
      .grip {
        flex: none; width: 3px; height: 19px; margin: 0 1px 0 2px;
        background: repeating-linear-gradient(#fff 0 2px, #999 2px 3px, #ccc 3px 4px);
      }
      .sep { flex: none; width: 1px; height: 22px; margin: 0 2px 0 3px; background: #fff; }
      button { flex: none; padding: 0; border: 0; background: none; font: inherit; color: #000; }
      .drop { display: grid; place-content: center; width: 12px; height: 20px; }
      .low { align-content: end; }
      .drop::before, .more::after {
        content: ""; border: 3px solid transparent; border-top-color: #000; border-bottom: 0;
      }
      .more {
        display: grid; justify-items: center; align-content: center; gap: 5px;
        width: 12px; font: bold 14px/6px "Liberation Sans", sans-serif;
      }
      :host([vertical]) { flex-direction: column; padding: 0; border-left: 0; border-top: 2px solid #fff; }
      :host([vertical]) .grip {
        width: 15px; height: 3px; margin: 2px 0;
        background: repeating-linear-gradient(90deg, #fff 0 2px, #999 2px 3px, #ccc 3px 4px);
      }
      :host([vertical]) .sep { width: 21px; height: 1px; margin: 2px 0 3px; }
      :host([vertical]) .drop::before {
        border: 3px solid transparent; border-right-color: #000; border-left: 0;
      }
      :host([vertical]) .drop { height: 12px; align-self: start; }
    `;
  }
}
customElements.define('nx-toolbar', NxToolbar);

class NxTitleBar extends NxElement {
  getTemplate() {
    return `
      <nx-icon name="nx-logo"></nx-icon>
      <h1><slot></slot></h1>
      <strong>SIEMENS</strong>
      <div>
        <button aria-label="minimize"><nx-icon name="win-min"></nx-icon></button>
        <button aria-label="restore"><nx-icon name="win-restore"></nx-icon></button>
        <button class="close" aria-label="close"><nx-icon name="win-close"></nx-icon></button>
      </div>
    `;
  }

  getStyles() {
    return `
      :host {
        display: flex; align-items: center; height: 21px; box-sizing: border-box;
        padding: 0 1px; border-bottom: 1px solid #000; color: #fff;
        background: linear-gradient(#666 7px, #333 7px);
      }
      h1 { flex: 1; margin: 0 0 0 3px; font-size: 12px; font-weight: normal; white-space: pre; }
      strong { font: bold 12px/16px "DejaVu Sans", sans-serif; margin-right: 27px; }
      div { display: flex; gap: 4px; }
      button {
        display: grid; place-content: center; width: 18px; height: 18px; padding: 0;
        border: 1px solid #666; border-radius: 3px; background: linear-gradient(#555 40%, #333 40%);
      }
      .close { background: linear-gradient(#f96, #d30); border-color: #c66; }
    `;
  }
}
customElements.define('nx-title-bar', NxTitleBar);

class NxMenuBar extends NxElement {
  getTemplate() {
    const items = [['文件', 'F'], ['编辑', 'E'], ['视图', 'V'], ['插入', 'S'], ['格式', 'R'], ['工具', 'T'],
      ['装配', 'A'], ['信息', 'I'], ['分析', 'L'], ['首选项', 'P'], ['窗口', 'O'], ['帮助', 'H']];
    return `
      <i></i>
      <nx-icon name="modeling"></nx-icon>
      <nav>${items.map(([text, key]) => `<button>${text}(<u>${key}</u>)</button>`).join('')}</nav>
      <div>
        <button aria-label="minimize document"><nx-icon name="doc-min"></nx-icon></button>
        <button aria-label="restore document"><nx-icon name="doc-restore"></nx-icon></button>
        <button aria-label="close document"><nx-icon name="doc-close"></nx-icon></button>
      </div>
    `;
  }

  getStyles() {
    return `
      :host {
        display: flex; align-items: center; height: 27px; box-sizing: border-box;
        border-top: 1px solid #fff; padding: 0 4px 1px 0;
      }
      i {
        width: 3px; height: 19px; margin: 0 1px 0 2px;
        background: repeating-linear-gradient(#fff 0 2px, #999 2px 3px, #ccc 3px 4px);
      }
      nx-icon { margin-left: -1px; }
      nav { flex: 1; display: flex; gap: 12px; padding-left: 4px; }
      button { padding: 0; border: 0; background: none; font: inherit; color: #000; }
      div { display: flex; gap: 2px; --icon: 16px; }
      div button {
        display: grid; place-content: center; width: 17px; height: 17px;
        background: #fff; border: 1px solid #666; border-radius: 4px;
      }
    `;
  }
}
customElements.define('nx-menu-bar', NxMenuBar);

class NxFilter extends NxElement {
  getTemplate() {
    return `
      <select aria-label="${this.getAttribute('label')}"><option>${this.getAttribute('value')}</option></select>
      <span></span>
    `;
  }

  getStyles() {
    return `
      :host { display: grid; flex: none; align-items: center; }
      select, span { grid-area: 1 / 1; }
      select {
        appearance: none; width: 100%; height: 20px; padding: 0 18px 0 1px; margin: 0;
        border: 1px solid #777; border-bottom-color: #fff; border-right-color: #999; border-radius: 4px;
        background: #fff; font: inherit; color: #000;
      }
      span {
        display: grid; place-content: center; justify-self: end; width: 16px; height: 18px;
        margin-right: 1px; border-radius: 0 3px 3px 0; pointer-events: none;
        background: linear-gradient(#36c, #9cf 60%, #def);
      }
      span::before { content: ""; border: 6px solid transparent; border-top: 7px solid #000; border-bottom: 0; }
    `;
  }
}
customElements.define('nx-filter', NxFilter);

class NxStatusBar extends NxElement {
  getTemplate() {
    return `
      <b><slot></slot></b>
      <span class="message"></span>
      <span class="blank"></span>
      <span class="part"><nx-icon name="globe"></nx-icon></span>
      <button aria-label="full screen"><nx-icon name="fullscreen"></nx-icon></button>
    `;
  }

  getStyles() {
    return `
      :host { display: flex; height: 21px; box-sizing: border-box; border-top: 1px solid #fff; --icon: 16px; }
      b { flex: 599; padding-left: 1px; font-size: 13px; line-height: 18px; white-space: nowrap; min-width: 0; }
      span, button { display: grid; place-content: center; border: 0; border-left: 1px solid #fff; padding: 0; }
      .message { flex: 601; }
      .blank { width: 19px; }
      .part { width: 36px; }
      button { width: 20px; background: none; box-sizing: border-box; }
    `;
  }
}
customElements.define('nx-status-bar', NxStatusBar);

class NxSplitter extends NxElement {
  getTemplate() {
    return `<hr><div><button aria-label="previous">&lt;</button><span></span><button aria-label="next">&gt;</button></div>`;
  }

  getStyles() {
    return `
      :host {
        display: block; position: relative; z-index: 2; height: 16px; box-sizing: border-box;
        border-top: 1px solid #999; border-bottom: 2px solid #888; padding: 4px 4px 0;
      }
      hr { height: 1px; margin: 0; border: 0; border-top: 2px solid #999; border-bottom: 1px solid #fff; }
      div {
        position: absolute; right: 176px; top: 0; display: flex; height: 22px;
        box-sizing: border-box; border: 1px solid #666; background: #333;
      }
      span { width: 70px; background: linear-gradient(#666 6px, #333 6px); }
      button {
        width: 21px; padding: 0; border: 0; background: linear-gradient(#fff 50%, #ddd 50%);
        color: #555; font: bold 17px/17px "DejaVu Sans", sans-serif;
      }
    `;
  }
}
customElements.define('nx-splitter', NxSplitter);

class NxResourceBar extends NxElement {
  getTemplate() {
    const groups = [['nav-assembly', 'nav-constraint', 'nav-part'], ['nav-info'], ['nav-web'],
      ['nav-history', 'nav-pages', 'nav-rainbow', 'nav-tools', 'nav-roles', 'nav-scene']];
    return groups.map((group) => `<div>${group.map((name) =>
      `<button aria-label="${name}"><nx-icon name="${name}"></nx-icon></button>`).join('')}</div>`).join('');
  }

  getStyles() {
    return `
      :host {
        display: flex; flex-direction: column; gap: 14px; flex: none;
        width: 26px; padding-top: 16px; background: #999; box-sizing: border-box;
      }
      div { display: grid; gap: 2px; padding-left: 4px; }
      button {
        display: grid; place-content: center; width: 21px; height: 32px; padding: 0;
        border: 1px solid #555; border-right: 0; border-radius: 4px 0 0 4px;
        background: linear-gradient(#eee, #ccc 3px); overflow: hidden;
      }
    `;
  }
}
customElements.define('nx-resource-bar', NxResourceBar);

class NxViewport extends NxElement {
  getTemplate() {
    return `
      <svg class="wcs" width="68" height="62" viewBox="0 0 68 62">
        <g font-family="Liberation Mono" font-size="10" fill="#f93">
          <text x="24" y="10">YC</text><text x="54" y="58">XC</text><text x="0" y="58">ZC</text>
        </g>
        <g fill="none" stroke-width="2" shape-rendering="crispEdges">
          <path stroke="#0f0" d="M19 46l4-33"/><path stroke="#f00" d="M19 47l31 9"/><path stroke="#00f" d="M18 47L2 57"/>
        </g>
      </svg>
      <svg class="part" width="64" height="63" viewBox="0 0 64 63" shape-rendering="crispEdges">
        <path fill="#f00" d="M0 0h64v63H0z"/><path fill="#f33" d="M0 58h64v5H0z"/>
        <path fill="none" stroke="#333" d="M0 57.500h2M2 58.500h52M54 57.500h10"/>
        <path fill="#600" stroke="#333" d="M9 62.500h34l-4-2H13z"/>
      </svg>
      <svg class="triad" width="58" height="54" viewBox="0 0 58 54">
        <g font-family="Liberation Mono" font-size="9">
          <text x="23" y="8" fill="#0c9">Y</text><text x="51" y="50" fill="#f33">X</text><text x="0" y="50" fill="#33f">Z</text>
        </g>
        <g fill="none" stroke-width="2" shape-rendering="crispEdges">
          <path stroke="#0c9" d="M22 37l3-27"/><path stroke="#f33" d="M22 37l24 8"/><path stroke="#33f" d="M21 37L8 45"/>
        </g>
        <circle cx="21" cy="37" r="3" fill="#999"/>
      </svg>
    `;
  }

  getStyles() {
    return `
      :host {
        display: block; position: relative; flex: 1; min-width: 0; margin-left: 6px;
        border-left: 2px solid #777; border-top: 1px solid #ccc; border-bottom: 1px solid #ccc;
        background: linear-gradient(#ccc 68.2%, #ccf 68.2% 71.2%, #cff 71.2% 74.2%, #fff 74.2%);
      }
      svg { position: absolute; overflow: visible; }
      .wcs { left: calc(50% - 146px); top: calc(50% - 72px); }
      .part { left: calc(50% - 36px); top: calc(50% - 84px); }
      .triad { left: 34px; bottom: 39px; }
    `;
  }
}
customElements.define('nx-viewport', NxViewport);

class NxImeBar extends NxElement {
  getTemplate() {
    return `
      <button aria-label="input method"><nx-icon name="paw"></nx-icon></button>
      <button>五</button>
      <button aria-label="half width"><nx-icon name="moon"></nx-icon></button>
      <button aria-label="punctuation"><nx-icon name="punctuation"></nx-icon></button>
      <button aria-label="settings"><nx-icon name="settings"></nx-icon></button>
    `;
  }

  getStyles() {
    return `
      :host {
        display: flex; box-sizing: border-box; height: 28px; padding: 0 1px;
        border: 1px solid #bbb; background: #fff; --icon: 16px;
      }
      button {
        display: grid; place-content: center; width: 26px; padding: 0; border: 0;
        background: none; color: #555; font: bold 16px/20px "Noto Sans CJK SC", sans-serif;
      }
    `;
  }
}
customElements.define('nx-ime-bar', NxImeBar);

class NxTask extends NxElement {
  getTemplate() {
    const icon = this.getAttribute('icon');
    return `<button aria-label="${icon}"><nx-icon name="${icon}"></nx-icon></button>`;
  }

  getStyles() {
    return `
      :host { display: flex; flex: none; width: 62px; box-sizing: border-box; padding: 1px 2px 0; --icon: 32px; }
      button {
        flex: 1; display: grid; place-content: center; padding: 0; border: 0; border-radius: 3px; background: none;
      }
      :host([open]) button {
        border: 1px solid #cff; outline: 1px solid #036;
        background: linear-gradient(160deg, #cce 20%, #9cc 20% 40%, #69c 40% 60%, #39c 60%);
      }
      :host([stack]) button { margin-right: 5px; box-shadow: 3px 0 #69c, 4px 0 #cff; outline: 0; }
      :host([tone="light"]) button {
        background: linear-gradient(160deg, #fff 12%, #ccf 12% 45%, #9cc 45% 75%, #6cc 75%);
      }
      :host([tone="gold"]) button {
        border-color: #ffc;
        background: linear-gradient(170deg, #ff9 25%, #cc6 25% 55%, #c93 55%);
      }
    `;
  }
}
customElements.define('nx-task', NxTask);

class NxTaskbar extends NxElement {
  getTemplate() {
    return `
      <svg class="wall" viewBox="0 0 1278 38" preserveAspectRatio="none" aria-hidden="true">
        <path fill="#39c" d="M0 0h1278v38H0z"/>
        <path fill="#369" d="M0 0h92l10 18-4 20H0z"/>
        <path fill="#399" d="M65 0h76l-2 12 5 12-8 14h-24l-8-10-10 2-10-14z"/>
        <path fill="#69c" d="M141 0h110l-40 12-30-6-24 14-14-4z"/>
        <path fill="#36c" d="M614 4h14l14 12 12 22h-58l1-12-4-2 10-8zM696 4l50-2 62-3 20 5 67-2v36H705z"/>
        <path fill="#369" d="M890 0h388v38H895z"/>
        <path fill="#069" d="M912 5h80l36 33H912zM1030 14l40 4 60 20h-80z"/>
        <path fill="#69c" d="M1000 1h16l44 37h-20z"/>
        <path fill="#036" d="M1204 4l50-2 22 24v12h-94l20-12z"/>
        <path fill="#336" d="M1246 0h32v38h-16z"/>
      </svg>
      <div class="bar">
        <nx-task class="start" icon="orb"></nx-task>
        <nx-task icon="flower"></nx-task>
        <i></i>
        <nx-task icon="palette"></nx-task>
        <nx-task icon="calculator"></nx-task>
        <nx-task icon="browser" open stack></nx-task>
        <nx-task icon="folder" open stack></nx-task>
        <nx-task icon="nx-logo" open tone="light"></nx-task>
        <nx-task icon="chat" open tone="gold"></nx-task>
        <nx-task icon="recorder" open></nx-task>
        <span class="fill"></span>
        <i></i>
        <button class="desk">桌面</button>
        <button class="link" aria-label="library"><nx-icon name="desk-folder"></nx-icon></button>
        <button class="chevron" aria-label="more links">»</button>
        <i></i>
        <button class="tray" aria-label="input"><nx-icon name="tray-paw"></nx-icon></button>
        <button class="tray" aria-label="help"><nx-icon name="tray-help"></nx-icon></button>
        <button class="tray" aria-label="restore language bar"><nx-icon name="tray-restore"></nx-icon></button>
        <button class="tray narrow" aria-label="hidden icons"><nx-icon name="tray-up"></nx-icon></button>
        <button class="tray wide" aria-label="security"><nx-icon name="tray-plus"></nx-icon></button>
        <button class="tray" aria-label="volume"><nx-icon name="speaker"></nx-icon></button>
        <time datetime="2015-11-05T08:31"><span>8:31</span><span>2015-11-05</span></time>
        <button class="peek" aria-label="show desktop"></button>
      </div>
    `;
  }

  getStyles() {
    return `
      :host { display: grid; height: 39px; box-sizing: border-box; border-top: 1px solid #114; color: #fff; overflow: hidden; }
      .wall, .bar { grid-area: 1 / 1; width: 100%; height: 38px; min-width: 0; }
      .bar { display: flex; align-items: stretch; box-shadow: inset 0 1px rgba(255, 255, 255, .4); }
      .start { width: 51px; --icon: 38px; }
      .fill { flex: 1; }
      i {
        flex: none; width: 9px; height: 30px; margin: 4px 6px 0 3px;
        background:
          radial-gradient(circle at 1px 1px, #024 1px, transparent 1px) 0 0 / 3px 4px;
      }
      button { flex: none; padding: 0; border: 0; background: none; color: #fff; font: inherit; }
      .desk { margin-right: 6px; }
      .link { display: grid; align-content: center; width: 32px; padding-bottom: 8px; --icon: 16px; }
      .chevron { width: 12px; padding-bottom: 20px; font: bold 14px/14px "Liberation Sans", sans-serif; }
      .tray { display: grid; place-content: center; width: 22px; --icon: 16px; }
      .narrow { width: 16px; }
      .wide { width: 32px; }
      .tray:last-of-type { width: 20px; }
      time { display: grid; align-content: center; justify-items: center; width: 94px; line-height: 18px; }
      .peek { width: 13px; border: 1px solid #699; background: rgba(102, 153, 153, .3); box-sizing: border-box; }
    `;
  }
}
customElements.define('nx-taskbar', NxTaskbar);

class NxApp extends NxElement {
  getTemplate() {
    return `
      <nx-title-bar>NX 7 - 建模 - [model4.prt （修改的） ]</nx-title-bar>
      <nx-menu-bar></nx-menu-bar>
      <div class="row">
        <nx-toolbar first tools="v new open save | cut copy paste | undo redo | repeat properties | information V"><nx-tool icon="nx-logo" wide>开始</nx-tool></nx-toolbar>
        <nx-toolbar tools="fit block zoom-area zoom rotate-view pan perspective | shaded v sphere clip hexagon v layer v background v | section-edit section section-new V"></nx-toolbar>
        <nx-toolbar tools="wcs* wcs-origin | expression ruler angle compass V"></nx-toolbar>
        <nx-toolbar tools="solid solid-info solid V"></nx-toolbar>
        <nx-toolbar tools="trim-a trim-b trim-c trim-d trim-e V"></nx-toolbar>
      </div>
      <div class="row second">
        <nx-toolbar first tools="sketch | datum-plane extrude revolve hole | boss pattern | feature >>"></nx-toolbar>
        <nx-toolbar tools="boolean v trim-body v | blend bridge shell thread slab draft | offset >>"></nx-toolbar>
        <nx-toolbar tools="surface-a surface-b surface-c | swept law V"></nx-toolbar>
        <nx-toolbar tools="curve-circle curve-line spline | offset-curve project-curve join-curve v wrap-curve edit-curve text-curve v V"></nx-toolbar>
        <nx-toolbar class="grow" tools="gear-spur gear-ring gear-spur gear-worm gear-pair gear-screw gear-bevel gear-blue sprocket-a gear-mesh sprocket-b wheel-a rack-a rack-b wheel-b"></nx-toolbar>
        <nx-toolbar nogrip tools=">>"></nx-toolbar>
      </div>
      <div class="row selection">
        <nx-filter class="type" label="类型过滤器" value="没有选择过滤器"></nx-filter>
        <nx-filter class="scope" label="选择范围" value="整个装配"></nx-filter>
        <nx-toolbar nogrip class="grow" tools="snap-off | filter v return erase undo-point highlight | rectangle v | cube-axis"></nx-toolbar>
        <nx-toolbar nogrip class="corner" tools="V"></nx-toolbar>
      </div>
      <nx-status-bar>选择对象并使用 MB3，或者双击某一对象</nx-status-bar>
      <nx-splitter></nx-splitter>
      <main>
        <nx-resource-bar></nx-resource-bar>
        <nx-viewport></nx-viewport>
        <aside>
          <nx-toolbar vertical tools="links* | line arc-tangent parallel cross line-circle two-circles shape | arc arc-line fillet-a fillet-b | circle-a circle-b circle-c circle-d | circle-e circle-f circle-g v"></nx-toolbar>
        </aside>
        <nx-ime-bar></nx-ime-bar>
      </main>
      <div class="row bottom">
        <nx-toolbar first tools="asm-find asm-open asm-box asm-show asm-save asm-part | asm-add asm-create asm-replace asm-array asm-move asm-mirror asm-constrain asm-remember asm-section asm-link asm-wave asm-explode | asm-stack asm-step | asm-clear asm-sheet asm-chain asm-cube asm-graph asm-tree | asm-sequence V"></nx-toolbar>
      </div>
      <nx-taskbar></nx-taskbar>
    `;
  }

  getStyles() {
    return `
      :host {
        display: flex; flex-direction: column; height: 100vh; box-sizing: border-box;
        border: 1px solid #000; background: #ccc;
      }
      .row { display: flex; flex: none; height: 27px; box-sizing: border-box; }
      .second { height: 28px; border-bottom: 2px solid #999; }
      .selection { height: 29px; align-items: center; padding: 0 0 2px 3px; }
      .grow { flex: 1; }
      .type { width: 143px; margin-right: 8px; }
      .scope { width: 151px; margin-right: 4px; }
      .corner { align-self: end; }
      .bottom { height: 26px; }
      main { flex: 1; display: flex; min-height: 0; position: relative; background: #fff; }
      aside {
        flex: none; width: 27px; box-sizing: border-box; padding-top: 13px;
        border-left: 2px solid #fff; background: #ccc;
      }
      nx-ime-bar { position: absolute; right: 420px; bottom: -20px; z-index: 1; }
    `;
  }
}
customElements.define('nx-app', NxApp);
</script>
</body>
</html>
